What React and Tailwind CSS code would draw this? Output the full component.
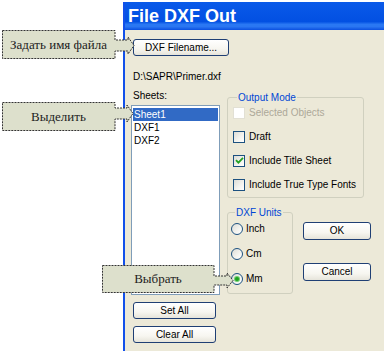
import React from 'react';

function XpButton({ children, className = '' }) {
    return (
        <div className={`flex items-center justify-center rounded-[3px] border border-[#1f3f74] bg-[linear-gradient(180deg,#ffffff_0%,#f7f6f0_60%,#e6e4da_100%)] text-[10px] leading-none text-black ${className}`}>
            {children}
        </div>
    );
}

function CheckBox({ label, checked = false, disabled = false }) {
    return (
        <div className="flex h-[13px] items-center gap-[4px]">
            <div className={`flex h-[12px] w-[12px] items-center justify-center border ${disabled ? 'border-[#e2e0d4] bg-white' : 'border-[#1c5180] bg-[linear-gradient(135deg,#dcdcd6_0%,#f4f4f0_60%,#ffffff_100%)]'}`}>
                {checked && (
                    <svg width="9" height="9" viewBox="0 0 9 9">
                        <path d="M1 4.2 L3.4 6.6 L8 1.8" stroke="#21a121" strokeWidth="1.8" fill="none" />
                    </svg>
                )}
            </div>
            <span className={disabled ? 'text-[#aca899]' : 'text-black'}>{label}</span>
        </div>
    );
}

function Radio({ label, checked = false }) {
    return (
        <div className="flex h-[13px] items-center gap-[3px]">
            <div className="flex h-[12px] w-[12px] items-center justify-center rounded-full border border-[#1c5180] bg-[linear-gradient(135deg,#dcdcd6_0%,#f4f4f0_60%,#ffffff_100%)]">
                {checked && <div className="h-[4px] w-[4px] rounded-full bg-[#21a121] ring-1 ring-[#6fcf6f]" />}
            </div>
            <span>{label}</span>
        </div>
    );
}

// callout box with an arrow on its right side; outline drawn in svg, text stays html
function Callout({ left, top, w, h, shaftTop, shaftBottom, tipX, text, className = '' }) {
    const r = w;
    const mid = (shaftTop + shaftBottom) / 2;
    const headW = 6;
    const d = `M0.5 0.5 H${r} V${shaftTop} H${tipX - headW} V${shaftTop - 3} L${tipX} ${mid} L${tipX - headW} ${shaftBottom + 3} V${shaftBottom} H${r} V${h - 0.5} H0.5 Z`;
    return (
        <div className={`absolute ${className}`} style={{ left, top }}>
            <svg width={tipX + 2} height={h + 1} className="absolute left-0 top-0">
                <path d={d} fill="#dde0cc" stroke="#333" strokeWidth="1" strokeDasharray="2 1" />
            </svg>
            <div className="relative flex items-center justify-center font-['Liberation_Serif',serif] text-[13px] text-[#222]" style={{ width: w, height: h }}>
                {text}
            </div>
        </div>
    );
}

export default function App() {
    return (
        <div className="relative flex h-[356px] w-[384px] overflow-hidden bg-white font-['Liberation_Sans',Arial,sans-serif] text-[10px] text-black">
            <div className="w-[123px] shrink-0" />

            <div className="mt-[2px] flex h-[349px] flex-1 flex-col border-l-2 border-[#1250ea] bg-[#ece9d8]">
                <div className="flex h-[28px] shrink-0 items-center bg-[linear-gradient(180deg,#0a5ae9_0%,#0250e2_70%,#2a78f3_80%,#2a76f2_88%,#0b4fe0_100%)] pl-[3px] pt-[1px] text-[18px] font-bold text-white">
                    File DXF Out
                </div>

                <div className="flex flex-col pl-[8px] pt-[9px]">
                    <XpButton className="h-[17px] w-[96px]">DXF Filename...</XpButton>
                    <div className="mt-[14px] h-[13px] leading-[13px]">D:\SAPR\Primer.dxf</div>

                    <div className="-ml-[2px] mt-[6px] flex">
                        <div className="flex w-[89px] flex-col">
                            <div className="h-[13px] pl-[2px] leading-[13px]">Sheets:</div>
                            <div className="mt-[3px] h-[190px] border border-[#7f9db9] bg-white px-[1px] pt-[2px] leading-[13px]">
                                <div className="h-[13px] bg-[#316ac5] pl-[1px] text-white">Sheet1</div>
                                <div className="h-[13px] pl-[1px]">DXF1</div>
                                <div className="h-[13px] pl-[1px]">DXF2</div>
                            </div>
                            <XpButton className="ml-[2px] mt-[7px] h-[17px] w-[83px]">Set All</XpButton>
                            <XpButton className="ml-[2px] mt-[7px] h-[17px] w-[83px]">Clear All</XpButton>
                        </div>

                        <div className="ml-[7px] flex flex-col">
                            <fieldset className="mt-[2px] h-[107px] w-[137px] rounded-[3px] border border-[#d0d0bf] pl-[5px]">
                                <legend className="ml-[4px] px-[1px] leading-[13px] text-[#0046d5]">Output Mode</legend>
                                <div className="flex flex-col gap-[11px] pt-[2px] leading-[13px]">
                                    <CheckBox label="Selected Objects" disabled />
                                    <CheckBox label="Draft" />
                                    <CheckBox label="Include Title Sheet" checked />
                                    <CheckBox label="Include True Type Fonts" />
                                </div>
                            </fieldset>

                            <div className="flex">
                                <fieldset className="mt-[8px] h-[88px] w-[66px] rounded-[3px] border border-[#d0d0bf] pl-[3px]">
                                    <legend className="ml-[4px] px-[1px] leading-[13px] text-[#0046d5]">DXF Units</legend>
                                    <div className="flex flex-col gap-[12px] pt-[3px] leading-[13px]">
                                        <Radio label="Inch" />
                                        <Radio label="Cm" />
                                        <Radio label="Mm" checked />
                                    </div>
                                </fieldset>
                                <div className="ml-[10px] flex flex-col">
                                    <XpButton className="mt-[24px] h-[18px] w-[68px]">OK</XpButton>
                                    <XpButton className="mt-[23px] h-[18px] w-[68px]">Cancel</XpButton>
                                </div>
                            </div>
                        </div>
                    </div>
                </div>
            </div>

            <Callout left={2} top={30} w={113} h={29} shaftTop={10} shaftBottom={21} tipX={132} text="Задать имя файла" />
            <Callout left={2} top={102} w={113} h={29} shaftTop={6} shaftBottom={17} tipX={131} text="Выделить" />
            <Callout left={102} top={265} w={112} h={28} shaftTop={11} shaftBottom={20} tipX={131} text="Выбрать" />
        </div>
    );
}
